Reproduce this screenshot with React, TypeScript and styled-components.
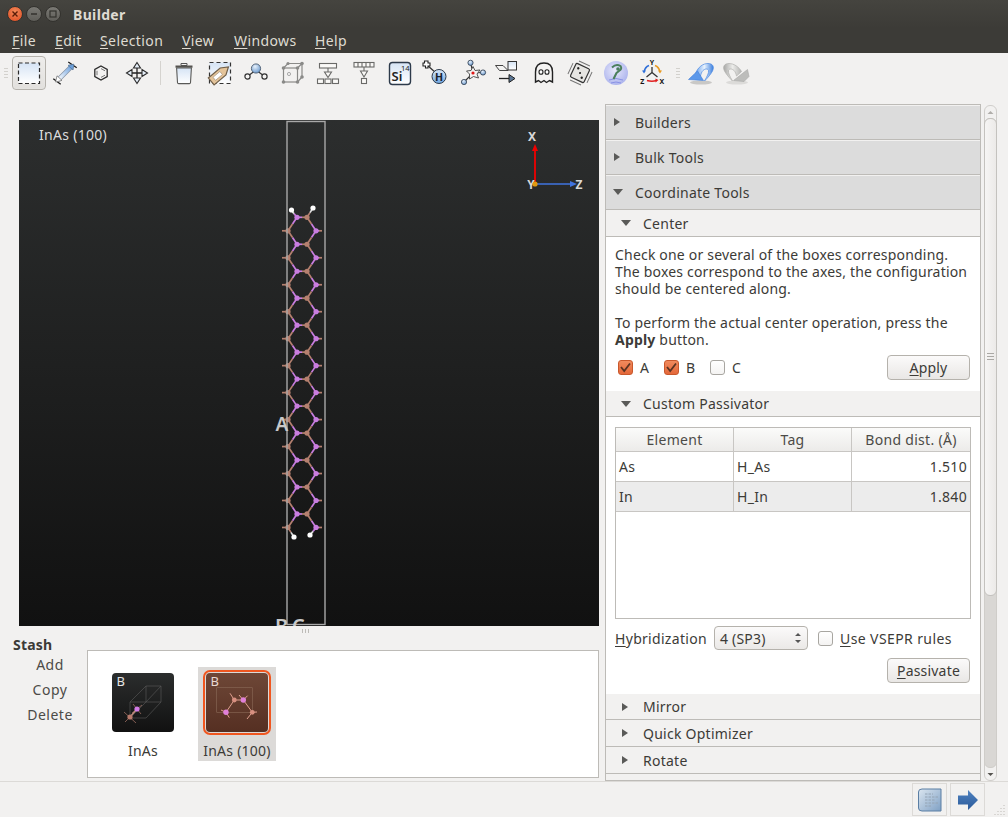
import React from "react";
import styled, { createGlobalStyle } from "styled-components";

const FONT = `"Noto Sans", "Open Sans", "DejaVu Sans", sans-serif`;

const Global = createGlobalStyle`
  html, body { margin: 0; padding: 0; background: #f2f1f0; }
  body { font-family: ${FONT}; font-size: 14px; color: #3c3b37; letter-spacing: 0.2px; }
  * { box-sizing: border-box; }
`;

const Window = styled.div`
  width: 1008px;
  height: 817px;
  display: flex;
  flex-direction: column;
  overflow: hidden;
  background: #f2f1f0;
`;

const TitleBar = styled.div`
  height: 28px;
  flex: none;
  display: flex;
  align-items: center;
  padding-left: 7px;
  background: linear-gradient(#45443f, #3c3b37);
`;

const WinButton = styled.span<{ $close?: boolean }>`
  width: 16px;
  height: 16px;
  border-radius: 50%;
  margin-right: 3px;
  display: flex;
  align-items: center;
  justify-content: center;
  border: 1px solid #33322e;
  background: ${(p) => (p.$close ? "radial-gradient(circle at 50% 35%, #f28a5a, #df4a20)" : "linear-gradient(#7a7974, #5f5e59)")};
`;

const Title = styled.span`
  margin-left: 9px;
  font-weight: 700;
  font-size: 14px;
  letter-spacing: 0.35px;
  color: #dfdbd2;
`;

const MenuBar = styled.div`
  height: 25px;
  flex: none;
  display: flex;
  align-items: center;
  padding-left: 12px;
  background: #3c3b37;
`;

const MenuItem = styled.span<{ $w: number }>`
  width: ${(p) => p.$w}px;
  flex: none;
  color: #dfdbd2;
  font-size: 14px;
  letter-spacing: 0.4px;
`;

const Mnemonic = styled.span`
  text-decoration: underline;
  text-underline-offset: 2px;
`;

const Toolbar = styled.div`
  height: 51px;
  flex: none;
  display: flex;
  align-items: flex-start;
  padding-top: 3px;
  padding-left: 4px;
`;

const Grip = styled.span`
  width: 4px;
  height: 10px;
  margin: 12px 4px 0 0;
  flex: none;
  background: repeating-linear-gradient(#d3d1cd 0 1px, transparent 1px 3px);
`;

const ToolGrip = styled(Grip)`
  margin: 12px 2px 0 6px;
`;

const ToolSlot = styled.span<{ $active?: boolean }>`
  width: 36px;
  height: 34px;
  flex: none;
  display: flex;
  align-items: center;
  justify-content: center;
  border-radius: 4px;
  ${(p) => p.$active && `border: 1px solid #b5b2ac; background: linear-gradient(#eeedeb, #e2e0dd); box-shadow: inset 0 0 1px #fff; width: 34px; margin: 0 1px 0 0;`}
`;

const ToolSep = styled.span`
  width: 1px;
  height: 24px;
  margin: 5px 5px 0 5px;
  flex: none;
  background: #d5d3cf;
`;

const RedoSlot = styled(ToolSlot)`
  margin-left: 1px;
`;

const Body = styled.div`
  flex: 1;
  min-height: 0;
  display: flex;
  align-items: flex-start;
`;

const LeftColumn = styled.div`
  width: 605px;
  flex: none;
  padding-top: 16px;
  display: flex;
  flex-direction: column;
`;

const Viewport = styled.div`
  position: relative;
  margin-left: 19px;
  width: 580px;
  height: 506px;
  background: linear-gradient(#2c2e2e, #111111);
  overflow: hidden;
`;

const ViewportTitle = styled.span`
  position: absolute;
  left: 20px;
  top: 5px;
  color: #dcdcdc;
  font-size: 14px;
  letter-spacing: 0.3px;
`;

const ViewportArt = styled.svg`
  position: absolute;
  left: 0;
  top: 0;
`;

const SplitHandle = styled.div`
  height: 11px;
  display: flex;
  justify-content: center;
  gap: 2px;
  padding: 3px 0 4px 6px;
`;

const SplitDot = styled.span`
  width: 1px;
  height: 4px;
  background: #bdbbb7;
`;

const StashTitle = styled.div`
  height: 13px;
  line-height: 16px;
  margin-left: 13px;
  font-weight: 700;
  font-size: 14px;
`;

const StashRow = styled.div`
  display: flex;
`;

const StashActions = styled.div`
  width: 87px;
  flex: none;
  display: flex;
  flex-direction: column;
  align-items: center;
  padding: 4px 0 0 13px;
`;

const StashAction = styled.span`
  height: 25px;
  line-height: 21px;
  font-size: 14px;
  letter-spacing: 0.5px;
  color: #4c4b47;
`;

const StashBox = styled.div`
  width: 512px;
  height: 128px;
  background: #fff;
  border: 1px solid #bdbbb7;
  display: flex;
  align-items: flex-start;
  padding: 16px 0 0 16px;
  gap: 16px;
`;

const StashItem = styled.div<{ $selected?: boolean }>`
  width: 78px;
  height: 94px;
  display: flex;
  flex-direction: column;
  align-items: center;
  padding-top: 6px;
  background: ${(p) => (p.$selected ? "#dcdad8" : "transparent")};
`;

const StashThumb = styled.div<{ $selected?: boolean }>`
  width: 62px;
  height: 62px;
  border-radius: 4px;
  overflow: hidden;
  background: ${(p) => (p.$selected ? "linear-gradient(#6e4737, #552f22)" : "linear-gradient(#2b2d2d, #111)")};
  ${(p) => p.$selected && `outline: 2.5px solid #f0561f; outline-offset: 1.5px;`}
`;

const StashLabel = styled.span`
  margin-top: 9px;
  line-height: 20px;
  font-size: 14px;
  letter-spacing: 0.25px;
  color: #3c3b37;
`;

const RightColumn = styled.div`
  flex: 1;
  display: flex;
  align-items: flex-start;
`;

const Panel = styled.div`
  width: 376px;
  height: 677px;
  border: 1px solid #bdbbb7;
  background: #f2f1f0;
  overflow: hidden;
`;

const SectionHeader = styled.div<{ $h: number; $level: 1 | 2 }>`
  height: ${(p) => p.$h}px;
  display: flex;
  align-items: center;
  padding-left: ${(p) => (p.$level === 1 ? 8 : 16)}px;
  background: ${(p) => (p.$level === 1 ? "#dcdcdc" : "#f2f1f0")};
  border-bottom: 1px solid #bdbbb7;
  ${(p) => p.$level === 1 && "box-shadow: inset 0 1px 0 #f2f1f0;"}
  font-size: 14px;
  color: #3c3b37;
`;

const Caret = styled.span<{ $open?: boolean }>`
  width: 21px;
  flex: none;
  &::before {
    content: "";
    display: block;
    width: 0;
    height: 0;
    ${(p) =>
      p.$open
        ? "border-left: 5px solid transparent; border-right: 5px solid transparent; border-top: 6px solid #5a5a58; margin-left: -1px;"
        : "border-top: 4.5px solid transparent; border-bottom: 4.5px solid transparent; border-left: 6px solid #5a5a58;"}
  }
`;

const HeaderText = styled.span`
  letter-spacing: 0.25px;
`;

const SectionBody = styled.div<{ $h: number; $top: number }>`
  height: ${(p) => p.$h}px;
  background: #fff;
  padding: ${(p) => p.$top}px 9px 0 9px;
`;

const Paragraph = styled.p`
  margin: 0;
  line-height: 17px;
  font-size: 14px;
  color: #3c3b37;
  white-space: pre-line;
  letter-spacing: 0.19px;
`;

const CheckRow = styled.div`
  display: flex;
  align-items: center;
  margin-top: 6px;
  padding-left: 3px;
  height: 26px;
`;

const Checkbox = styled.span<{ $checked?: boolean }>`
  width: 15px;
  height: 15px;
  flex: none;
  border-radius: 3px;
  display: flex;
  align-items: center;
  justify-content: center;
  border: 1px solid ${(p) => (p.$checked ? "#c9582c" : "#a8a6a1")};
  background: ${(p) => (p.$checked ? "linear-gradient(#f08a5d, #e4683a)" : "linear-gradient(#fff, #f4f3f2)")};
`;

const CheckLabel = styled.span`
  margin: 0 16px 0 7px;
  font-size: 14px;
  width: 8px;
`;

const Spacer = styled.span`
  flex: 1;
`;

const PushButton = styled.span`
  width: 83px;
  height: 25px;
  flex: none;
  display: flex;
  align-items: center;
  justify-content: center;
  border: 1px solid #b5b2ac;
  border-radius: 4px;
  background: linear-gradient(#fbfafa, #e9e7e5);
  font-size: 14px;
`;

const ApplyButton = styled(PushButton)`
  margin-right: 1px;
`;

const Table = styled.div`
  height: 192px;
  border: 1px solid #bdbbb7;
  background: #fff;
`;

const TableRow = styled.div<{ $head?: boolean; $selected?: boolean; $h: number }>`
  display: grid;
  grid-template-columns: 118px 118px 1fr;
  height: ${(p) => p.$h}px;
  background: ${(p) => (p.$head ? "linear-gradient(#fbfbfa, #ecebe9)" : p.$selected ? "#ececec" : "#fff")};
  border-bottom: 1px solid #c8c6c3;
`;

const Cell = styled.span<{ $head?: boolean; $right?: boolean }>`
  display: flex;
  align-items: center;
  padding: 0 3px;
  justify-content: ${(p) => (p.$head ? "center" : p.$right ? "flex-end" : "flex-start")};
  border-right: 1px solid #c8c6c3;
  font-size: 14px;
  letter-spacing: 0.3px;
  color: ${(p) => (p.$head ? "#4c4b47" : "#3c3b37")};
  &:last-child { border-right: none; }
`;

const HybridRow = styled.div`
  display: flex;
  align-items: center;
  height: 24px;
  margin-top: 7px;
`;

const HybridLabel = styled.span`
  width: 99px;
  flex: none;
  font-size: 14px;
  letter-spacing: 0.3px;
`;

const SelectBox = styled.span`
  width: 94px;
  height: 24px;
  flex: none;
  display: flex;
  align-items: center;
  justify-content: space-between;
  padding: 0 5px;
  border: 1px solid #b5b2ac;
  border-radius: 4px;
  background: linear-gradient(#fbfafa, #ebe9e7);
  font-size: 14px;
`;

const VseprLabel = styled.span`
  margin-left: 7px;
  font-size: 14px;
  letter-spacing: 0.4px;
`;

const VseprBox = styled(Checkbox)`
  margin-left: 10px;
`;

const PassivateRow = styled.div`
  display: flex;
  justify-content: flex-end;
  margin-top: 8px;
  padding-right: 1px;
`;

const ScrollBar = styled.div`
  width: 13px;
  height: 676px;
  margin: 1px 0 0 3px;
  flex: none;
  display: flex;
  flex-direction: column;
  border: 1px solid #d0cecb;
  border-radius: 6px;
  background: #f2f1f0;
`;

const ScrollEnd = styled.div`
  height: 12px;
  flex: none;
  display: flex;
  align-items: center;
  justify-content: center;
`;

const ScrollTrack = styled.div`
  flex: 1;
  margin: 0 -1px;
  border-radius: 6px;
  background: #d9d7d4;
  border: 1px solid #cfcdc9;
`;

const ScrollThumb = styled.div`
  height: 478px;
  margin: -1px;
  border-radius: 6px;
  border: 1px solid #c4c2be;
  background: linear-gradient(90deg, #f6f5f4, #eceae8);
  display: flex;
  align-items: center;
  justify-content: center;
`;

const ThumbGrip = styled.span`
  width: 7px;
  height: 8px;
  background: repeating-linear-gradient(#aaa8a4 0 1px, transparent 1px 3px);
`;

const StatusBar = styled.div`
  height: 36px;
  flex: none;
  margin-top: auto;
  border-top: 1px solid #dcdad7;
  display: flex;
  align-items: flex-start;
  justify-content: flex-end;
  padding: 1px 23px 0 0;
  gap: 3px;
  position: relative;
`;

const StatusButton = styled.span`
  width: 35px;
  height: 33px;
  display: flex;
  align-items: center;
  justify-content: center;
  border: 1px solid #dcdad7;
`;

const ResizeGrip = styled.svg`
  position: absolute;
  right: 2px;
  bottom: 2px;
`;

/* -------- icons -------- */

const Ico: React.FC<{ children: React.ReactNode; s?: number }> = ({ children, s = 30 }) => (
  <svg width={s} height={s} viewBox={`0 0 ${s} ${s}`}>
    {children}
  </svg>
);

const DefsHolder = styled.svg`
  position: absolute;
`;

const Defs = () => (
  <DefsHolder width="0" height="0">
    <defs>
      <linearGradient id="lb" x1="0" y1="0" x2="0" y2="1">
        <stop offset="0" stopColor="#d6e4f5" />
        <stop offset="1" stopColor="#ffffff" />
      </linearGradient>
      <linearGradient id="meas" x1="1" y1="0" x2="0" y2="1">
        <stop offset="0" stopColor="#6ba0de" />
        <stop offset="1" stopColor="#ffffff" />
      </linearGradient>
      <radialGradient id="ball" cx="0.4" cy="0.3" r="0.8">
        <stop offset="0" stopColor="#e6f0fb" />
        <stop offset="1" stopColor="#5e90c8" />
      </radialGradient>
      <linearGradient id="hBall" x1="0" y1="0" x2="0" y2="1">
        <stop offset="0" stopColor="#d9e8f8" />
        <stop offset="1" stopColor="#6fa6e0" />
      </linearGradient>
      <radialGradient id="quest" cx="0.45" cy="0.4" r="0.65">
        <stop offset="0" stopColor="#e8e8fb" />
        <stop offset="1" stopColor="#a9b1ec" />
      </radialGradient>
      <linearGradient id="undoG" x1="0" y1="0.5" x2="1" y2="0.5">
        <stop offset="0" stopColor="#6aa2ee" />
        <stop offset="0.5" stopColor="#e8f2fd" />
        <stop offset="1" stopColor="#3a7ede" />
      </linearGradient>
      <linearGradient id="redoG" x1="0" y1="0.5" x2="1" y2="0.5">
        <stop offset="0" stopColor="#a8a8a6" />
        <stop offset="0.5" stopColor="#ececea" />
        <stop offset="1" stopColor="#b4b4b2" />
      </linearGradient>
      <linearGradient id="blueArrow" x1="0" y1="0" x2="0" y2="1">
        <stop offset="0" stopColor="#4f82c0" />
        <stop offset="1" stopColor="#2a5a9a" />
      </linearGradient>
      <linearGradient id="docG" x1="0" y1="0" x2="1" y2="1">
        <stop offset="0" stopColor="#dbe6f0" />
        <stop offset="1" stopColor="#7fa0c4" />
      </linearGradient>
    </defs>
  </DefsHolder>
);

const SelectIcon = () => (
  <Ico>
    <rect x="4.5" y="5" width="21" height="20.5" fill="url(#lb)" stroke="#2a2a2a" strokeWidth="1.2" strokeDasharray="4 2.5" />
  </Ico>
);

const MeasureIcon = () => (
  <Ico>
    <path d="M3.3 20.7 L10.7 26.3 M18.3 4 L26.7 9.7" stroke="#1c1c1c" strokeWidth="1.3" />
    <path d="M8 22 L22 8" stroke="#8593a6" strokeWidth="4.6" />
    <path d="M8 22 L22 8" stroke="url(#meas)" strokeWidth="3.2" />
    <path d="M5.6 24 L7 17.8 L12 22.4 Z" fill="#fff" stroke="#777" strokeWidth="0.8" />
    <path d="M23.8 6.2 L23 12 L18 7.4 Z" fill="#6ba0dc" stroke="#5a7a9c" strokeWidth="0.8" />
  </Ico>
);

const RingIcon = () => (
  <Ico>
    <path d="M15 8 L21.2 11.5 L21.2 18.5 L15 22 L8.8 18.5 L8.8 11.5 Z" fill="#f4f3f2" stroke="#2c2c2c" strokeWidth="1.3" />
    <path d="M15 10.6 L19 12.8 M19 17.2 L15 19.4 M11 17.2 L11 12.8" stroke="#777" strokeWidth="1" />
  </Ico>
);

const MoveIcon = () => (
  <Ico>
    <path d="M15 6 L15 24 M6 15 L24 15" stroke="#222" strokeWidth="1.3" />
    <path d="M15 4.5 L18.5 10 L11.5 10 Z M15 25.5 L11.5 20 L18.5 20 Z" fill="#e4edf7" stroke="#2a2a2a" strokeWidth="1.1" />
    <path d="M4.5 15 L10 11.5 L10 18.5 Z M25.5 15 L20 18.5 L20 11.5 Z" fill="#e4edf7" stroke="#2a2a2a" strokeWidth="1.1" />
  </Ico>
);

const TrashIcon = () => (
  <Ico>
    <path d="M12 5.5 L18 5.5 L18 7.5 L12 7.5 Z" fill="none" stroke="#555" strokeWidth="1" />
    <rect x="6.5" y="7.5" width="17" height="2.2" fill="#55534f" />
    <path d="M7.6 10 L8.5 24.5 Q8.6 25.6 9.6 25.6 L20.4 25.6 Q21.4 25.6 21.5 24.5 L22.4 10 Z" fill="url(#lb)" stroke="#5a5a58" strokeWidth="1.1" />
  </Ico>
);

const TagIcon = () => (
  <Ico>
    <rect x="4.5" y="4.5" width="21" height="21" fill="url(#lb)" stroke="#333" strokeWidth="1.2" strokeDasharray="4 3" />
    <g transform="rotate(-40 15 16)">
      <path d="M3.5 11.5 L19 11.5 L26 16 L19 20.5 L3.5 20.5 Z" fill="#e4c49a" stroke="#6f5f4a" strokeWidth="1.2" />
      <rect x="7.5" y="14" width="9" height="4" fill="#fff" stroke="#9a8c78" strokeWidth="0.6" />
    </g>
  </Ico>
);

const BondIcon = () => (
  <Ico>
    <path d="M7 18 L15 12 L23 18" stroke="#333" strokeWidth="1.2" fill="none" />
    <circle cx="15" cy="10.5" r="4.6" fill="url(#ball)" stroke="#4a5a6e" strokeWidth="0.9" />
    <circle cx="6.5" cy="18.5" r="2.6" fill="#f4f3f2" stroke="#333" strokeWidth="1.2" />
    <circle cx="23.5" cy="18.5" r="2.6" fill="#f4f3f2" stroke="#333" strokeWidth="1.2" />
  </Ico>
);

const CubeIcon = () => (
  <Ico>
    <g fill="none" stroke="#8a8a88" strokeWidth="1.2">
      <rect x="6.5" y="10" width="14" height="14" />
      <path d="M6.5 10 L11 5.5 L25 5.5 L25 19 L20.5 24 M20.5 10 L25 5.5" />
    </g>
    <circle cx="12" cy="16" r="1.6" fill="none" stroke="#aaa" />
    <g fill="#8a8a88">
      <circle cx="6.5" cy="10" r="1.8" /><circle cx="20.5" cy="10" r="1.8" /><circle cx="6.5" cy="24" r="1.8" />
      <circle cx="20.5" cy="24" r="1.8" /><circle cx="25" cy="5.5" r="1.8" /><circle cx="11" cy="5.5" r="1.6" /><circle cx="25" cy="19" r="1.8" />
    </g>
  </Ico>
);

const SplitAIcon = () => (
  <Ico>
    <g fill="#faf9f7" stroke="#6a6a68" strokeWidth="1.1">
      <rect x="6.5" y="5.5" width="17" height="4.5" />
      <rect x="4.5" y="21" width="6" height="4.5" /><rect x="12" y="21" width="6" height="4.5" /><rect x="19.5" y="21" width="6" height="4.5" />
      <path d="M15 10 L15 15" />
      <path d="M11.5 14 L18.5 14 L15 19.5 Z" />
    </g>
  </Ico>
);

const SplitBIcon = () => (
  <Ico>
    <g fill="#faf9f7" stroke="#6a6a68" strokeWidth="1.1">
      <rect x="5" y="4.5" width="20" height="4.5" />
      <path d="M9 4.5 V9 M13 4.5 V9 M17 4.5 V9 M21 4.5 V9" />
      <path d="M15 9 L15 14" />
      <path d="M11.5 13 L18.5 13 L15 19 Z" />
      <rect x="12.5" y="20.5" width="5" height="5" />
    </g>
  </Ico>
);

const ElementIcon = () => (
  <Ico>
    <rect x="4.5" y="4.5" width="21" height="22" rx="3" fill="url(#lb)" stroke="#2d3a4a" strokeWidth="1.4" />
    <text x="6.5" y="23" fontFamily={FONT} fontSize="13" fontWeight="600" fill="#222">Si</text>
    <text x="16" y="12.5" fontFamily={FONT} fontSize="7.5" letterSpacing="0" fill="#222">14</text>
  </Ico>
);

const HydrogenIcon = () => (
  <Ico>
    <path d="M6 7 L15 15" stroke="#333" strokeWidth="1.4" />
    <path d="M3.5 3 H7 V5 H9 V8 H7 V10 H4.5 V8 H2 V5 H3.5 Z" fill="#fff" stroke="#222" strokeWidth="1.1" />
    <circle cx="18" cy="18.5" r="7" fill="url(#hBall)" stroke="#2d3a4a" strokeWidth="1" />
    <text x="18" y="22.5" textAnchor="middle" fontFamily={FONT} fontSize="10.5" fontWeight="700" fill="#16202c">H</text>
  </Ico>
);

const StarIcon = () => (
  <Ico>
    <path d="M16 15 L13.5 4.5 M16 15 L26 14.5 M16 15 L7 24" stroke="#333" strokeWidth="1.1" />
    <path d="M16 8.5 L18 12.5 L23 12 L20 16 L21.5 20 L16.5 18.5 L12.5 21 L12.5 16 L9.5 13 L14 12.5 Z" fill="#f4f3f2" stroke="#444" strokeWidth="0.9" />
    <circle cx="16" cy="15" r="1.6" fill="#e01818" />
    <circle cx="13.5" cy="4.8" r="2.6" fill="url(#ball)" stroke="#2d3a4a" strokeWidth="0.8" />
    <circle cx="26" cy="14.5" r="2.6" fill="url(#ball)" stroke="#2d3a4a" strokeWidth="0.8" />
    <circle cx="7" cy="24" r="2.6" fill="url(#ball)" stroke="#2d3a4a" strokeWidth="0.8" />
  </Ico>
);

const TransformIcon = () => (
  <Ico>
    <path d="M2.5 7.5 L10 7.5 L15 12.5 L6.5 12.5 Z" fill="#f4f3f2" stroke="#444" strokeWidth="1" />
    <rect x="15" y="3.5" width="8.5" height="8.5" fill="url(#lb)" stroke="#333" strokeWidth="1" />
    <path d="M6 20.5 L17 20.5" stroke="#222" strokeWidth="1.3" />
    <path d="M16 16.5 L22 20.5 L16 24.5 Z" fill="#5b7694" stroke="#222" strokeWidth="1" />
  </Ico>
);

const GhostIcon = () => (
  <Ico>
    <path d="M6.5 24 L6.5 14 C6.5 8 10 5 15 5 C20 5 23.5 8 23.5 14 L23.5 24 L20.5 22.5 L17.5 24.5 L15 22.5 L12 24.5 L9.5 22.5 Z" fill="#f4f3f2" stroke="#222" strokeWidth="1.4" />
    <ellipse cx="12" cy="14" rx="2" ry="2.3" fill="#fff" stroke="#222" strokeWidth="1.1" />
    <ellipse cx="18" cy="14" rx="2" ry="2.3" fill="#fff" stroke="#222" strokeWidth="1.1" />
  </Ico>
);

const DiceIcon = () => (
  <Ico>
    <g transform="rotate(25 15 15)">
      <rect x="7.5" y="7.5" width="15" height="15" rx="1.5" fill="#e6e5e2" stroke="#333" strokeWidth="1.2" />
      <circle cx="11.5" cy="11.5" r="1.2" fill="#222" /><circle cx="18.5" cy="18.5" r="1.2" fill="#222" /><circle cx="15" cy="15" r="1" fill="#222" />
      <path d="M9 4.5 L21 4.5 M25.5 9 L25.5 21 M21 25.5 L9 25.5 M4.5 21 L4.5 9" stroke="#777" strokeWidth="1" />
    </g>
  </Ico>
);

const QuestionIcon = () => (
  <Ico>
    <circle cx="15" cy="15" r="12" fill="url(#quest)" />
    <path d="M8 22 Q15 19 22 22 M10 25 Q15 23 20 25" stroke="#8a92e4" strokeWidth="1" fill="none" />
    <path d="M11 9.5 Q15 5.5 19.5 8 Q21.5 11 18 13 L15.5 15 L12.5 21" stroke="#4b7f5c" strokeWidth="2" fill="none" />
    <circle cx="17" cy="11" r="1.8" fill="#4b7f5c" />
  </Ico>
);

const AxesIcon = () => (
  <Ico>
    <path d="M15 14.5 L15 9 M15 14.5 L9.5 19 M15 14.5 L20.5 19" stroke="#333" strokeWidth="1.3" />
    <path d="M12 7.5 Q8 9 7 14" stroke="#2f6fd8" strokeWidth="1.6" fill="none" />
    <path d="M5 12.5 L7 15.5 L9 12.5 Z" fill="#2f6fd8" />
    <path d="M18 7.5 Q22 9 23 14" stroke="#e89a20" strokeWidth="1.6" fill="none" />
    <path d="M21 12.5 L23 15.5 L25 12.5 Z" fill="#e89a20" />
    <path d="M10 22.5 Q15 24 19.5 22.5" stroke="#e02020" strokeWidth="1.6" fill="none" />
    <path d="M18.5 20.5 L21.5 22 L18.5 24.5 Z" fill="#e02020" />
    <text x="15" y="6.5" textAnchor="middle" fontFamily={FONT} fontSize="7" fontWeight="700" fill="#111">Y</text>
    <text x="5.5" y="26" textAnchor="middle" fontFamily={FONT} fontSize="7" fontWeight="700" fill="#111">Z</text>
    <text x="25" y="26" textAnchor="middle" fontFamily={FONT} fontSize="7" fontWeight="700" fill="#111">X</text>
  </Ico>
);

const UndoIcon = () => (
  <Ico>
    <ellipse cx="16" cy="24.5" rx="11" ry="2" fill="#c9c8c6" />
    <path d="M10.5 15.5 C13 9 18 5.5 23 5.5 C28 5.5 29.5 9 27.5 13 C26 16 23 19.5 19.5 23 C22 18.5 24 15 23.5 12.5 C23 10.5 20 10.5 18 12.5 C16.5 14 16 16 15.5 18 Z" fill="url(#undoG)" stroke="#4a88e2" strokeWidth="0.7" />
    <path d="M3.5 21.5 L12.5 13 L18.5 22.5 Z" fill="#5c98ea" stroke="#3f7ed8" strokeWidth="0.6" />
  </Ico>
);

const RedoIcon = () => (
  <Ico>
    <ellipse cx="15" cy="24.5" rx="11" ry="2" fill="#dcdbd9" />
    <path d="M19.5 13.5 C17 9 12 5.5 7 5.5 C2 5.5 0.5 9 2.5 13 C4 16 7 19.5 10.5 23 C8 18.5 6 15 6.5 12.5 C7 10.5 10 10.5 12 12.5 C13.5 14 14 16 14.5 18 Z" fill="url(#redoG)" stroke="#b0b0ae" strokeWidth="0.7" />
    <path d="M27 18.5 L25.5 11.5 L11.5 22.5 L22 23.5 Z" fill="#bdbdbb" stroke="#a8a8a6" strokeWidth="0.6" />
  </Ico>
);

const DocIcon = () => (
  <svg width="26" height="26" viewBox="0 0 26 26">
    <path d="M5 2 H24 V24 H5 Q1.5 24 1.5 21 V5 Q1.5 2 5 2 Z" fill="url(#docG)" stroke="#5a7ea4" strokeWidth="1" />
    <path d="M8 7 H16 M8 10 H21 M8 13 H18 M8 16 H21 M8 19 H15" stroke="#94a4b4" strokeWidth="1" strokeDasharray="2.5 1" />
  </svg>
);

const ForwardIcon = () => (
  <svg width="22" height="24" viewBox="0 0 22 24">
    <path d="M1 7.5 H11 V2 L21 12 L11 22 V16.5 H1 Z" fill="url(#blueArrow)" />
  </svg>
);

const CheckMark = () => (
  <svg width="13" height="13" viewBox="0 0 13 13">
    <path d="M2 6 L5.2 10 L11 2.5" fill="none" stroke="#5a3322" strokeWidth="1.8" />
  </svg>
);

const SpinArrows = () => (
  <svg width="8" height="14" viewBox="0 0 8 14">
    <path d="M1 5 L4 2 L7 5 Z M1 9 L4 12 L7 9 Z" fill="#555" />
  </svg>
);

/* -------- molecule -------- */

const PURPLE = "#c97de0";
const BROWN = "#b5806f";

const HalfBond: React.FC<{ x1: number; y1: number; x2: number; y2: number; c1: string; c2: string }> = ({ x1, y1, x2, y2, c1, c2 }) => {
  const mx = (x1 + x2) / 2;
  const my = (y1 + y2) / 2;
  return (
    <>
      <line x1={x1} y1={y1} x2={mx} y2={my} stroke={c1} strokeWidth="1.7" />
      <line x1={mx} y1={my} x2={x2} y2={y2} stroke={c2} strokeWidth="1.7" />
    </>
  );
};

const Atom: React.FC<{ x: number; y: number; c: string }> = ({ x, y, c }) => <circle cx={x} cy={y} r="2.6" fill={c} />;

const Molecule = () => {
  const rows = Array.from({ length: 12 }, (_, k) => 217.3 + k * 26.97);
  return (
    <g transform="translate(-19 -120)">
      {rows.map((y, k) => (
        <g key={k}>
          <HalfBond x1={297} y1={y} x2={307} y2={y} c1={PURPLE} c2={BROWN} />
          <HalfBond x1={297} y1={y} x2={288} y2={y + 13.5} c1={PURPLE} c2={BROWN} />
          <HalfBond x1={307} y1={y} x2={316} y2={y + 13.5} c1={BROWN} c2={PURPLE} />
          <HalfBond x1={288} y1={y + 13.5} x2={282} y2={y + 13.5} c1={BROWN} c2={BROWN} />
          <HalfBond x1={316} y1={y + 13.5} x2={322} y2={y + 13.5} c1={PURPLE} c2={BROWN} />
          {k < 11 && (
            <>
              <HalfBond x1={288} y1={y + 13.5} x2={297} y2={y + 27} c1={BROWN} c2={PURPLE} />
              <HalfBond x1={316} y1={y + 13.5} x2={307} y2={y + 27} c1={PURPLE} c2={BROWN} />
            </>
          )}
          <Atom x={297} y={y} c={PURPLE} />
          <Atom x={307} y={y} c={BROWN} />
          <Atom x={288} y={y + 13.5} c={BROWN} />
          <Atom x={316} y={y + 13.5} c={PURPLE} />
        </g>
      ))}
      <HalfBond x1={297} y1={217.3} x2={291} y2={210} c1={PURPLE} c2="#ddd" />
      <HalfBond x1={307} y1={217.3} x2={313} y2={208} c1={BROWN} c2="#ddd" />
      <HalfBond x1={288} y1={527.7} x2={294} y2={537} c1={BROWN} c2="#ddd" />
      <HalfBond x1={316} y1={527.7} x2={310} y2={535} c1={PURPLE} c2="#ddd" />
      <circle cx={291.5} cy={210} r="2.6" fill="#fff" />
      <circle cx={313} cy={208} r="2.6" fill="#fff" />
      <circle cx={294} cy={537} r="2.6" fill="#fff" />
      <circle cx={310} cy={535} r="2.6" fill="#fff" />
      <rect x="287" y="121.5" width="38" height="503" fill="none" stroke="#a8a8a8" strokeWidth="1.4" />
      <text x="282" y="431" textAnchor="middle" fontFamily={FONT} fontSize="19" fontWeight="600" fill="#c8c8c8">A</text>
      <text x="275" y="633" fontFamily={FONT} fontSize="20" fontWeight="600" fill="#c8c8c8">B</text>
      <text x="292" y="633" fontFamily={FONT} fontSize="20" fontWeight="600" fill="#c8c8c8">C</text>
      <line x1="535" y1="184" x2="535" y2="150" stroke="#f00000" strokeWidth="1.8" />
      <path d="M535 144 L538 151 L532 151 Z" fill="#f00000" />
      <line x1="535" y1="184" x2="571" y2="184" stroke="#3f74e0" strokeWidth="1.6" />
      <path d="M577 184 L570 181 L570 187 Z" fill="#3f74e0" />
      <text x="532" y="141" textAnchor="middle" fontFamily={FONT} fontSize="12" fontWeight="700" fill="#d8d8d8">X</text>
      <text x="531" y="189" textAnchor="middle" fontFamily={FONT} fontSize="12" fontWeight="700" fill="#d8d8d8">Y</text>
      <text x="579" y="189" textAnchor="middle" fontFamily={FONT} fontSize="12" fontWeight="700" fill="#d8d8d8">Z</text>
      <circle cx="535" cy="184" r="2.6" fill="#e09a10" />
    </g>
  );
};

const ThumbA = () => (
  <svg width="62" height="62" viewBox="0 0 62 62">
    <text x="4.5" y="13" fontFamily={FONT} fontSize="13" fill="#e4e4e4">B</text>
    <g fill="none" stroke="#5a5a5a" strokeWidth="0.6">
      <path d="M18 29 L34 13 L49 13 L49 29 L34 45 L18 45 Z M34 13 L34 29 M18 29 L34 29 L49 13 M34 29 L49 29 M18 45 L34 29" />
    </g>
    <path d="M18 44 L25 36" stroke="#d4a090" strokeWidth="1.2" />
    <path d="M12 39 L24 50 M13 49 L23 39 M21 31 L29 41 M20 40 L30 32" stroke="#b07a6c" strokeWidth="0.7" />
    <circle cx="18" cy="44" r="2.6" fill="#b87a6c" />
    <circle cx="25" cy="36" r="2.6" fill="#d27be6" />
  </svg>
);

const ThumbB = () => (
  <svg width="62" height="62" viewBox="0 0 62 62">
    <text x="4.5" y="13" fontFamily={FONT} fontSize="13" fill="#e8d8d0">B</text>
    <rect x="10.7" y="14.7" width="35.6" height="24.6" fill="none" stroke="#8a6a58" strokeWidth="0.6" />
    <path d="M20 39.3 L28.3 27 L24 20.3 M28.3 27 L37.3 27 L46.3 39.3 L41 46 M46.3 39.3 L51 39 M37.3 27 L41.6 22.7 M37.3 27 L33 22 M20 39.3 L15 37 M20 39.3 L23.3 44.7" fill="none" stroke="#e0a090" strokeWidth="1" />
    <circle cx="28.3" cy="27" r="2.4" fill="#d89080" />
    <circle cx="37.3" cy="27" r="2.7" fill="#e080d8" />
    <circle cx="20" cy="39.3" r="2.7" fill="#e080d8" />
    <circle cx="46.3" cy="39.3" r="2.4" fill="#d89080" />
  </svg>
);

const TOOLS1 = [MeasureIcon, RingIcon, MoveIcon];
const TOOLS2 = [TagIcon, BondIcon, CubeIcon, SplitAIcon, SplitBIcon, ElementIcon, HydrogenIcon, StarIcon, TransformIcon, GhostIcon, DiceIcon, QuestionIcon, AxesIcon];

const Menu: React.FC<{ k: string; rest: string; w: number }> = ({ k, rest, w }) => (
  <MenuItem $w={w}>
    <Mnemonic>{k}</Mnemonic>
    {rest}
  </MenuItem>
);

const Section: React.FC<{ h: number; level: 1 | 2; open?: boolean; label: string }> = ({ h, level, open, label }) => (
  <SectionHeader $h={h} $level={level}>
    <Caret $open={open} />
    <HeaderText>{label}</HeaderText>
  </SectionHeader>
);

export default function App() {
  return (
    <Window>
      <Global />
      <Defs />
      <TitleBar>
        <WinButton $close>
          <svg width="8" height="8" viewBox="0 0 8 8"><path d="M1.5 1.5 L6.5 6.5 M6.5 1.5 L1.5 6.5" stroke="#5a1c08" strokeWidth="1.4" /></svg>
        </WinButton>
        <WinButton>
          <svg width="8" height="8" viewBox="0 0 8 8"><path d="M1 4 H7" stroke="#33322e" strokeWidth="1.5" /></svg>
        </WinButton>
        <WinButton>
          <svg width="8" height="8" viewBox="0 0 8 8"><rect x="1" y="1" width="6" height="6" fill="none" stroke="#33322e" strokeWidth="1.2" /></svg>
        </WinButton>
        <Title>Builder</Title>
      </TitleBar>
      <MenuBar>
        <Menu k="F" rest="ile" w={43} />
        <Menu k="E" rest="dit" w={45} />
        <Menu k="S" rest="election" w={82} />
        <Menu k="V" rest="iew" w={52} />
        <Menu k="W" rest="indows" w={81} />
        <Menu k="H" rest="elp" w={40} />
      </MenuBar>
      <Toolbar>
        <Grip />
        <ToolSlot $active>
          <SelectIcon />
        </ToolSlot>
        {TOOLS1.map((I, i) => (
          <ToolSlot key={i}>
            <I />
          </ToolSlot>
        ))}
        <ToolSep />
        <ToolSlot>
          <TrashIcon />
        </ToolSlot>
        {TOOLS2.map((I, i) => (
          <ToolSlot key={i}>
            <I />
          </ToolSlot>
        ))}
        <ToolGrip />
        <ToolSlot>
          <UndoIcon />
        </ToolSlot>
        <RedoSlot>
          <RedoIcon />
        </RedoSlot>
      </Toolbar>
      <Body>
        <LeftColumn>
          <Viewport>
            <ViewportArt width="580" height="506" viewBox="0 0 580 506">
              <Molecule />
            </ViewportArt>
            <ViewportTitle>InAs (100)</ViewportTitle>
          </Viewport>
          <SplitHandle>
            <SplitDot />
            <SplitDot />
            <SplitDot />
          </SplitHandle>
          <StashTitle>Stash</StashTitle>
          <StashRow>
            <StashActions>
              <StashAction>Add</StashAction>
              <StashAction>Copy</StashAction>
              <StashAction>Delete</StashAction>
            </StashActions>
            <StashBox>
              <StashItem>
                <StashThumb>
                  <ThumbA />
                </StashThumb>
                <StashLabel>InAs</StashLabel>
              </StashItem>
              <StashItem $selected>
                <StashThumb $selected>
                  <ThumbB />
                </StashThumb>
                <StashLabel>InAs (100)</StashLabel>
              </StashItem>
            </StashBox>
          </StashRow>
        </LeftColumn>
        <RightColumn>
          <Panel>
            <Section h={35} level={1} label="Builders" />
            <Section h={35} level={1} label="Bulk Tools" />
            <Section h={35} level={1} open label="Coordinate Tools" />
            <Section h={27} level={2} open label="Center" />
            <SectionBody $h={154} $top={9}>
              <Paragraph>
                {"Check one or several of the boxes corresponding.\nThe boxes correspond to the axes, the configuration\nshould be centered along.\n\nTo perform the actual center operation, press the\n"}
                <b>Apply</b>
                {" button."}
              </Paragraph>
              <CheckRow>
                <Checkbox $checked><CheckMark /></Checkbox>
                <CheckLabel>A</CheckLabel>
                <Checkbox $checked><CheckMark /></Checkbox>
                <CheckLabel>B</CheckLabel>
                <Checkbox />
                <CheckLabel>C</CheckLabel>
                <Spacer />
                <ApplyButton>
                  <span><Mnemonic>A</Mnemonic>pply</span>
                </ApplyButton>
              </CheckRow>
            </SectionBody>
            <Section h={26} level={2} open label="Custom Passivator" />
            <SectionBody $h={277} $top={10}>
              <Table>
                <TableRow $head $h={24}>
                  <Cell $head>Element</Cell>
                  <Cell $head>Tag</Cell>
                  <Cell $head>Bond dist. (Å)</Cell>
                </TableRow>
                <TableRow $h={30}>
                  <Cell>As</Cell>
                  <Cell>H_As</Cell>
                  <Cell $right>1.510</Cell>
                </TableRow>
                <TableRow $selected $h={30}>
                  <Cell>In</Cell>
                  <Cell>H_In</Cell>
                  <Cell $right>1.840</Cell>
                </TableRow>
              </Table>
              <HybridRow>
                <HybridLabel><Mnemonic>H</Mnemonic>ybridization</HybridLabel>
                <SelectBox>
                  <span>4 (SP3)</span>
                  <SpinArrows />
                </SelectBox>
                <VseprBox />
                <VseprLabel><Mnemonic>U</Mnemonic>se VSEPR rules</VseprLabel>
              </HybridRow>
              <PassivateRow>
                <PushButton>
                  <span><Mnemonic>P</Mnemonic>assivate</span>
                </PushButton>
              </PassivateRow>
            </SectionBody>
            <Section h={26} level={2} label="Mirror" />
            <Section h={27} level={2} label="Quick Optimizer" />
            <Section h={27} level={2} label="Rotate" />
          </Panel>
          <ScrollBar>
            <ScrollEnd>
              <svg width="7" height="5" viewBox="0 0 7 5"><path d="M0.5 4 L3.5 1 L6.5 4 Z" fill="#b0aeaa" /></svg>
            </ScrollEnd>
            <ScrollTrack>
              <ScrollThumb>
                <ThumbGrip />
              </ScrollThumb>
            </ScrollTrack>
            <ScrollEnd>
              <svg width="7" height="5" viewBox="0 0 7 5"><path d="M0.5 1 L3.5 4 L6.5 1 Z" fill="#55534f" /></svg>
            </ScrollEnd>
          </ScrollBar>
        </RightColumn>
      </Body>
      <StatusBar>
        <StatusButton><DocIcon /></StatusButton>
        <StatusButton><ForwardIcon /></StatusButton>
        <ResizeGrip width="12" height="12" viewBox="0 0 12 12">
          <path d="M10 2 V3 M7 5 V6 M10 5 V6 M4 8 V9 M7 8 V9 M10 8 V9 M1 11 V12 M4 11 V12 M7 11 V12 M10 11 V12" stroke="#cfcdc9" strokeWidth="1.5" />
        </ResizeGrip>
      </StatusBar>
    </Window>
  );
}
